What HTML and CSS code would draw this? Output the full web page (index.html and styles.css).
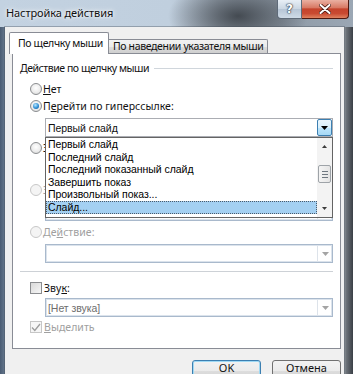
FILE: index.html
```html
<!DOCTYPE html>
<html lang="ru">
<head>
<meta charset="utf-8">
<title>Настройка действия</title>
<link rel="stylesheet" href="styles.css">
</head>
<body>
<div class="window">
  <div class="titlebar">
    <span class="title">Настройка действия</span>
    <div class="caption-btns">
      <span class="cbtn help">?</span>
      <span class="cbtn close">
        <svg width="12" height="10" viewBox="0 0 12 10"><path d="M1.5 1 L10.5 9 M10.5 1 L1.5 9" stroke="#4a1a12" stroke-width="3.6" stroke-linecap="round"/><path d="M1.5 1 L10.5 9 M10.5 1 L1.5 9" stroke="#fff" stroke-width="2" stroke-linecap="round"/></svg>
      </span>
    </div>
  </div>
  <div class="frame">
    <div class="client">
      <div class="tabs">
        <div class="tab active">По щелчку мыши</div>
        <div class="tab inactive">По наведении указателя мыши</div>
      </div>
      <div class="panel">
        <div class="group-head"><span>Действие по щелчку мыши</span><i class="rule"></i></div>

        <div class="opt row-none"><span class="radio"></span><span><u>Н</u>ет</span></div>
        <div class="opt row-link"><span class="radio checked"></span><span>П<u>е</u>рейти по гиперссылке:</span></div>
        <div class="combo hot combo-link">
          <span class="val">Первый слайд</span>
          <span class="dd-btn"><svg width="7" height="4" viewBox="0 0 7 4"><path d="M0 0 H7 L3.5 4 Z" fill="#000"/></svg></span>
          <div class="droplist">
            <div class="items">
              <div class="item">Первый слайд</div>
              <div class="item">Последний слайд</div>
              <div class="item">Последний показанный слайд</div>
              <div class="item">Завершить показ</div>
              <div class="item">Произвольный показ...</div>
              <div class="item selected">Слайд...</div>
            </div>
            <div class="scrollbar">
              <span class="sb-btn"><svg width="5" height="3" viewBox="0 0 5 3"><path d="M0 3 L2.5 0 L5 3 Z" fill="#3c3c3c"/></svg></span>
              <span class="thumb"><i></i><i></i><i></i></span>
              <span class="sb-btn down"><svg width="5" height="3" viewBox="0 0 5 3"><path d="M0 0 H5 L2.5 3 Z" fill="#3c3c3c"/></svg></span>
            </div>
          </div>
        </div>

        <div class="opt row-gap"><span class="radio"></span><span>Запуск программы:</span></div>
        <div class="combo disabled combo-gap"><span class="val"></span></div>

        <div class="opt row-gap dis"><span class="radio"></span><span>Запуск макроса:</span></div>
        <div class="combo disabled combo-gap"><span class="val"></span><span class="dd-btn"><svg width="7" height="4" viewBox="0 0 7 4"><path d="M0 0 H7 L3.5 4 Z" fill="#a4a4a4"/></svg></span></div>

        <div class="opt row-gap dis"><span class="radio"></span><span>Де<u>й</u>ствие:</span></div>
        <div class="combo disabled combo-gap"><span class="val"></span><span class="dd-btn"><svg width="7" height="4" viewBox="0 0 7 4"><path d="M0 0 H7 L3.5 4 Z" fill="#a4a4a4"/></svg></span></div>

        <div class="separator"></div>

        <div class="opt row-sound"><span class="check"></span><span>Зву<u>к</u>:</span></div>
        <div class="combo disabled combo-sound"><span class="val">[Нет звука]</span><span class="dd-btn"><svg width="7" height="4" viewBox="0 0 7 4"><path d="M0 0 H7 L3.5 4 Z" fill="#a4a4a4"/></svg></span></div>

        <div class="opt row-hl dis"><span class="check checked"><svg width="10" height="9" viewBox="0 0 10 9"><path d="M1 4.5 L3.8 7.5 L9 1" stroke="#9c9c9c" stroke-width="1.3" fill="none"/></svg></span><span><u>В</u>ыделить</span></div>
      </div>
      <div class="buttons">
        <span class="button default">OK</span>
        <span class="button">Отмена</span>
      </div>
    </div>
  </div>
</div>
</body>
</html>
```
FILE: styles.css
```css
* { box-sizing: border-box; }
html, body { margin: 0; padding: 0; }
body {
  width: 353px;
  height: 374px;
  overflow: hidden;
  font-family: "Noto Sans", "Open Sans", sans-serif;
  font-size: 10.5px;
  letter-spacing: 0;
  color: #111;
  background: #56687d;
}
u { text-decoration: underline; text-underline-offset: 1px; text-decoration-thickness: 1px; }

.window { width: 353px; height: 374px; display: flex; flex-direction: column; }

.titlebar {
  height: 27px;
  flex: none;
  display: flex;
  align-items: flex-start;
  background:
    radial-gradient(ellipse 70px 36px at 238px 16px, rgba(45,50,56,.8), rgba(45,50,56,0)),
    linear-gradient(to right, #c3d2e1 0, #c0cfde 48%, #a6b2bf 62%, #8f9aa6 80%, #9ba7b4 100%);
}
.title {
  padding: 5px 0 0 6px;
  line-height: 16px;
  font-size: 11px;
  letter-spacing: -0.1px;
  text-shadow: 0 0 6px #fff, 0 0 3px #fff;
}
.caption-btns { margin-left: auto; margin-right: 4px; display: flex; }
.cbtn { height: 19px; display: flex; align-items: center; justify-content: center; }
.help {
  width: 25px;
  border: 1px solid #5f6b79;
  border-top: none;
  border-radius: 0 0 0 4px;
  background: linear-gradient(#e8eff6, #cbd7e3 48%, #b7c6d6 52%, #cfdbe7);
  color: #fff;
  font: bold 12px "DejaVu Sans", sans-serif;
  text-shadow: 0 0 1px #2d3a48, 0 0 1px #2d3a48, 0 0 2px #2d3a48;
}
.close {
  width: 47px;
  border: 1px solid #4f1910;
  border-top: none;
  border-left: none;
  border-radius: 0 0 4px 0;
  background: linear-gradient(#eab0a2, #d87a65 42%, #c5432c 50%, #c94a31 75%, #e0825f);
}

.frame {
  flex: 1;
  display: flex;
  padding: 0 9px 0 5px;
  background: linear-gradient(to right, #4a5c73 0, #66788d 5px, #9aa0a6 344px, #6f757c 346px, #3a3f46 353px);
}
.client {
  flex: 1;
  background: #f0f0f0;
  padding: 5px 3px 0 7px;
  box-shadow: 0 0 0 1px rgba(60, 70, 80, .35);
}

.tabs { display: flex; align-items: flex-end; height: 21px; margin-left: -3px; }
.tab { border: 1px solid #898c95; border-bottom: none; white-space: nowrap; overflow: hidden; letter-spacing: -0.35px; }
.tab.active {
  width: 100px;
  height: 22px;
  margin-bottom: -1px;
  background: #fff;
  position: relative;
  z-index: 1;
  border-radius: 2px 2px 0 0;
  padding-left: 8px;
  line-height: 20px;
}
.tab.inactive {
  width: 159px;
  height: 14px;
  border-left: none;
  border-radius: 0 2px 0 0;
  background: linear-gradient(#f2f2f2, #ebebeb 50%, #dddddd 51%, #cfcfcf);
  line-height: 13px;
  padding-left: 4px;
}

.panel {
  border: 1px solid #898c95;
  background: #fff;
  padding: 7px 7px 13px 7px;
  display: flex;
  flex-direction: column;
}
.group-head { display: flex; align-items: center; height: 14px; line-height: 14px; white-space: nowrap; letter-spacing: -0.45px; }
.group-head .rule { flex: 1; height: 1px; background: #d0d6dc; margin-left: 5px; }

.opt { display: flex; align-items: center; height: 16px; padding-left: 10px; white-space: nowrap; letter-spacing: 0.05px; }
.opt.dis { color: #a0a0a0; }
.row-none { margin-top: 6px; }
.row-link { margin-top: 1px; }
.row-gap { margin-top: 3px; }
.row-sound { margin-top: 8px; }
.row-hl { margin-top: 2px; }

.radio {
  width: 12px; height: 12px; flex: none;
  border-radius: 50%;
  border: 1px solid #8b8d90;
  background: radial-gradient(circle at 50% 40%, #fff 0, #ececec 55%, #d0d0d0 100%);
  margin-right: 1px;
  display: flex; align-items: center; justify-content: center;
}
.radio.checked::after {
  content: "";
  width: 6px; height: 6px; border-radius: 50%;
  background: radial-gradient(circle at 40% 35%, #b9e8ff 0, #2f8fd6 55%, #0c4e8a 100%);
}
.opt.dis .radio { border-color: #c8c8c8; background: #f4f4f4; }

.check {
  width: 12px; height: 12px; flex: none;
  border: 1px solid #8b8d90;
  background: linear-gradient(135deg, #d9d9d9, #f7f7f7);
  margin-right: 2px;
  display: flex; align-items: center; justify-content: center;
}
.opt.dis .check { border-color: #c6c6c6; background: #f6f6f6; }

.combo {
  margin-left: 25px;
  height: 19px;
  border: 1px solid #abadb3;
  background: #fff;
  display: flex;
  align-items: center;
  position: relative;
  font-family: "Liberation Sans", Arial, sans-serif;
  font-size: 10.5px;
  letter-spacing: -0.05px;
  white-space: nowrap;
}
.combo-link { margin-top: 4px; }
.combo-gap { margin-top: 4px; }
.combo-sound { margin-top: 2px; }
.combo .val { flex: 1; padding-left: 2px; }
.combo .dd-btn {
  width: 15px; height: 17px; flex: none;
  display: flex; align-items: center; justify-content: center;
}
.combo.hot .dd-btn {
  border: 1px solid #3c7fb1;
  border-radius: 2px;
  background: linear-gradient(#eaf6fd, #d9f0fc 50%, #bee6fd 51%, #a7d9f5);
}
.combo.disabled {
  border-color: #a9b9cc;
  box-shadow: inset 0 0 0 1px #dbe3ec;
  color: #6d6d6d;
}
.combo.disabled .dd-btn { border-left: 1px solid #dde3ea; }

.separator { height: 1px; background: #cdd1d6; margin-top: 8px; }

.droplist {
  position: absolute;
  top: 18px;
  left: -1px;
  width: 288px;
  height: 81px;
  border: 1px solid #646464;
  background: #fff;
  display: flex;
  z-index: 2;
  color: #000;
}
.items { flex: 1; }
.item { line-height: 12.6px; height: 12.6px; padding-left: 2px; }
.item.selected { background: #a4d0f2; outline: 1px dotted #4b5a6a; outline-offset: -1px; }
.scrollbar {
  width: 15px; flex: none;
  background: #f3f3f3;
  display: flex; flex-direction: column; align-items: center;
}
.sb-btn { width: 15px; height: 17px; display: flex; align-items: center; justify-content: center; }
.sb-btn.down { margin-top: auto; }
.thumb {
  width: 13px; height: 18px; margin-top: 10px;
  border: 1px solid #9ea3a8;
  border-radius: 2px;
  background: linear-gradient(to right, #f4f4f4, #e4e4e4);
  display: flex; flex-direction: column; align-items: center; justify-content: center; gap: 2px;
}
.thumb i { width: 6px; height: 1px; background: #6e7780; }

.buttons { display: flex; justify-content: flex-end; gap: 11px; margin-top: 11px; }
.button {
  width: 69px; height: 22px;
  border: 1px solid #707070;
  border-radius: 3px;
  background: linear-gradient(#f2f2f2, #ebebeb 50%, #dddddd 51%, #cfcfcf);
  text-align: center;
  line-height: 14px;
  font-size: 11px;
}
.button.default { border-color: #3c7fb1; box-shadow: inset 0 0 0 1px #9fd9f4; }
```
